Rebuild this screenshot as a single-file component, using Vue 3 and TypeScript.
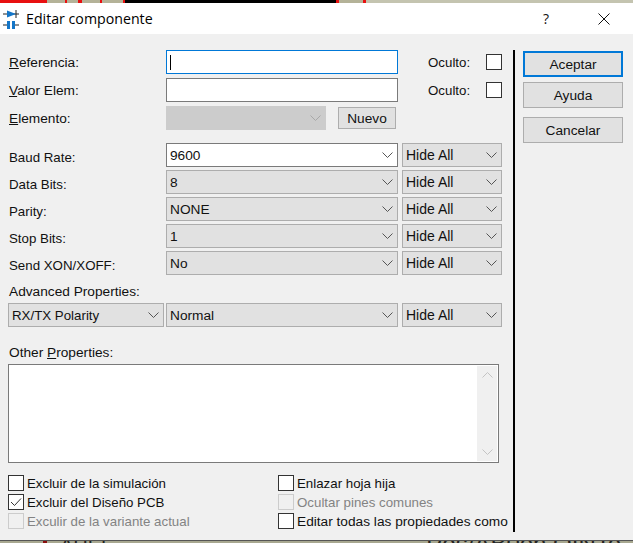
<script setup lang="ts">
interface Row { label: string; value: string; editable?: boolean }
const rows: Row[] = [
  { label: 'Baud Rate:', value: '9600', editable: true },
  { label: 'Data Bits:', value: '8' },
  { label: 'Parity:', value: 'NONE' },
  { label: 'Stop Bits:', value: '1' },
  { label: 'Send XON/XOFF:', value: 'No' }
]
</script>

<template>
  <div class="screen">
    <div class="strip-top">
      <span class="seg red w47"></span>
      <span class="seg tan w18"></span><span class="seg red w2"></span>
      <span class="seg tan w11"></span><span class="seg red w4"></span>
      <span class="seg tan w18"></span><span class="seg red w2"></span>
      <span class="seg tan w23"></span><span class="seg red w2"></span>
      <span class="seg black w211"></span>
      <span class="seg red w3"></span>
      <span class="seg tan w24"></span>
      <span class="seg red w3"></span>
      <span class="seg pale"></span>
    </div>
    <div class="titlebar">
      <svg class="app-icon" width="16" height="20" viewBox="0 0 16 20">
        <path d="M0 5h16M13 1v8" stroke="#222" stroke-width="1" fill="none" />
        <path d="M4 1.500l9 3.500-9 3.500z" fill="#1476c8" />
        <path d="M0 16h4M12 16h4" stroke="#222" stroke-width="1" fill="none" />
        <rect x="4" y="12" width="3" height="8" fill="#1476c8" />
        <rect x="9" y="12" width="3" height="8" fill="#1476c8" />
      </svg>
      <span class="title">Editar componente</span>
      <span class="help">?</span>
      <svg class="close" width="12" height="12" viewBox="0 0 12 12">
        <path d="M.5.5l11 11M11.500.5l-11 11" stroke="#111" stroke-width="1" fill="none" />
      </svg>
    </div>
    <div class="body">
      <div class="left">
        <div class="row first">
          <label class="lbl"><u>R</u>eferencia:</label>
          <div class="input focus"><i class="caret"></i></div>
          <span class="oc">Oculto:</span>
          <span class="check"></span>
        </div>
        <div class="row">
          <label class="lbl"><u>V</u>alor Elem:</label>
          <div class="input"></div>
          <span class="oc">Oculto:</span>
          <span class="check"></span>
        </div>
        <div class="row">
          <label class="lbl"><u>E</u>lemento:</label>
          <div class="combo disabled">
            <svg class="chev" width="11" height="6" viewBox="0 0 11 6"><path d="M.5.5l5 5 5-5" fill="none" stroke="#a8a8a8" /></svg>
          </div>
          <button class="nuevo">Nuevo</button>
        </div>
        <div class="props">
          <div v-for="r in rows" :key="r.label" class="prop">
            <span class="plbl">{{ r.label }}</span>
            <div class="combo wide" :class="{ edit: r.editable }">
              <span>{{ r.value }}</span>
              <svg class="chev" width="11" height="6" viewBox="0 0 11 6"><path d="M.5.5l5 5 5-5" fill="none" stroke="#555" /></svg>
            </div>
            <div class="combo hide">
              <span>Hide All</span>
              <svg class="chev" width="11" height="6" viewBox="0 0 11 6"><path d="M.5.5l5 5 5-5" fill="none" stroke="#555" /></svg>
            </div>
          </div>
        </div>
        <div class="adv-label">Advanced Properties:</div>
        <div class="adv">
          <div class="combo rx">
            <span>RX/TX Polarity</span>
            <svg class="chev" width="11" height="6" viewBox="0 0 11 6"><path d="M.5.5l5 5 5-5" fill="none" stroke="#555" /></svg>
          </div>
          <div class="combo wide">
            <span>Normal</span>
            <svg class="chev" width="11" height="6" viewBox="0 0 11 6"><path d="M.5.5l5 5 5-5" fill="none" stroke="#555" /></svg>
          </div>
          <div class="combo hide">
            <span>Hide All</span>
            <svg class="chev" width="11" height="6" viewBox="0 0 11 6"><path d="M.5.5l5 5 5-5" fill="none" stroke="#555" /></svg>
          </div>
        </div>
        <div class="other-label">Other <u>P</u>roperties:</div>
        <div class="textarea">
          <div class="scroll">
            <svg width="11" height="6" viewBox="0 0 11 6"><path d="M.5 5.500l5-5 5 5" fill="none" stroke="#c4c4c4" /></svg>
            <svg width="11" height="6" viewBox="0 0 11 6"><path d="M.5.5l5 5 5-5" fill="none" stroke="#c4c4c4" /></svg>
          </div>
        </div>
        <div class="checks">
          <div class="ck"><span class="check"></span>Excluir de la simulación</div>
          <div class="ck"><span class="check"></span>Enlazar hoja hija</div>
          <div class="ck">
            <span class="check">
              <svg width="14" height="14" viewBox="0 0 14 14"><path d="M2 7l3.500 3.500L12 3.500" fill="none" stroke="#333" /></svg>
            </span>Excluir del Diseño PCB
          </div>
          <div class="ck off"><span class="check"></span>Ocultar pines comunes</div>
          <div class="ck off"><span class="check"></span>Exculir de la variante actual</div>
          <div class="ck long"><span class="check"></span>Editar todas las propiedades como</div>
        </div>
      </div>
      <div class="divider"></div>
      <div class="buttons">
        <button class="btn default">Aceptar</button>
        <button class="btn">Ayuda</button>
        <button class="btn cancel">Cancelar</button>
      </div>
    </div>
    <div class="strip-bottom">
      <i class="mark"></i>
      <span class="sch a">AREF</span>
      <span class="sch b">Pos/AB0on OINTo</span>
    </div>
  </div>
</template>

<style scoped>
.screen {
  width: 633px;
  height: 543px;
  overflow: hidden;
  display: flex;
  flex-direction: column;
  font-family: "Liberation Sans", Arial, sans-serif;
  font-size: 13.7px;
  color: #111;
  background: #f0f0f0;
}
.strip-top { height: 3px; display: flex; flex: none; }
.seg { flex: none; }
.red { background: #e81010; }
.tan { background: #b4b298; }
.black { background: #000; }
.pale { flex: 1; background: #c4c4b0; }
.w2 { width: 2px; }
.w3 { width: 3px; }
.w4 { width: 4px; }
.w11 { width: 11px; }
.w18 { width: 18px; }
.w23 { width: 21px; }
.w24 { width: 24px; }
.w47 { width: 47px; }
.w211 { width: 211px; }
.titlebar {
  height: 31px;
  flex: none;
  background: #fff;
  display: flex;
  align-items: center;
  padding-left: 3px;
}
.app-icon { margin-right: 7px; }
.title { font-family: "Open Sans", sans-serif; font-size: 14.2px; color: #000; }
.help { margin-left: auto; font-family: "Open Sans", sans-serif; font-size: 14px; margin-right: 49px; }
.close { margin-right: 23px; }
.body { flex: 1; display: flex; min-height: 0; padding-top: 16px; }
.left { width: 513px; flex: none; padding-left: 8px; box-sizing: border-box; }
.row { display: flex; align-items: center; height: 24px; margin-bottom: 4px; }
.lbl { width: 158px; flex: none; padding-left: 1px; box-sizing: border-box; }
.input {
  width: 232px;
  height: 24px;
  box-sizing: border-box;
  background: #fff;
  border: 1px solid #7a7a7a;
  flex: none;
  display: flex;
  align-items: center;
  padding-left: 3px;
}
.input.focus { border-color: #0078d7; }
.caret { width: 1px; height: 15px; background: #000; }
.oc { margin-left: 30px; width: 58px; flex: none; font-size: 13.3px; }
.check {
  width: 16px;
  height: 16px;
  box-sizing: border-box;
  border: 1px solid #333;
  background: #fff;
  flex: none;
  display: inline-flex;
  align-items: center;
  justify-content: center;
}
.combo {
  height: 24px;
  box-sizing: border-box;
  border: 1px solid #adadad;
  background: #e1e1e1;
  display: flex;
  align-items: center;
  justify-content: space-between;
  padding: 0 4px 0 3px;
  flex: none;
}
.chev { flex: none; margin-left: auto; }
.combo.disabled { width: 160px; background: #ccc; border-color: #ccc; }
.combo.wide { width: 232px; }
.combo.edit { background: #fff; border-color: #7a7a7a; }
.combo.hide { width: 100px; margin-left: 4px; font-size: 14px; }
.combo.rx { width: 156px; margin-right: 2px; font-size: 13.3px; }
.nuevo {
  width: 58px;
  height: 22px;
  margin-left: 12px;
  font: inherit;
  color: inherit;
  background: #e1e1e1;
  border: 1px solid #adadad;
  padding: 0;
}
.props { margin-top: 13px; display: flex; flex-direction: column; gap: 3px; }
.prop { display: flex; align-items: center; }
.plbl { width: 158px; flex: none; padding: 5px 0 0 1px; box-sizing: border-box; font-size: 13.3px; }
.adv-label { margin-top: 9px; padding-left: 1px; height: 19px; line-height: 15px; }
.adv { display: flex; }
.other-label { margin-top: 18px; padding-left: 1px; height: 19px; line-height: 15px; }
.textarea {
  width: 491px;
  height: 99px;
  box-sizing: border-box;
  background: #fff;
  border: 1px solid #7a7a7a;
  display: flex;
  justify-content: flex-end;
  padding: 1px;
}
.scroll {
  width: 20px;
  background: #f0f0f0;
  display: flex;
  flex-direction: column;
  justify-content: space-between;
  align-items: center;
  padding: 6px 0;
  box-sizing: border-box;
}
.checks {
  margin-top: 12px;
  display: grid;
  grid-template-columns: 270px 1fr;
  grid-auto-rows: 19px;
  font-size: 13.3px;
}
.ck { display: flex; align-items: center; gap: 3px; white-space: nowrap; height: 16px; }
.ck.long { font-size: 13.7px; }
.ck.off { color: #838383; }
.ck.off .check { border-color: #ccc; background: #f0f0f0; }
.divider { width: 2px; flex: none; height: 482px; background: #000; }
.buttons { display: flex; flex-direction: column; gap: 5px; padding: 1px 0 0 8px; }
.btn {
  width: 100px;
  height: 26px;
  font: inherit;
  color: inherit;
  background: #e1e1e1;
  border: 1px solid #adadad;
  padding: 0;
}
.btn.default { border: 2px solid #0078d7; }
.btn.cancel { margin-top: 4px; }
.strip-bottom {
  height: 3px;
  flex: none;
  box-sizing: border-box;
  border-top: 1px solid #555;
  background: #a8a890;
  display: flex;
  overflow: hidden;
  font-size: 20px;
  line-height: 20px;
  color: #222;
}
.mark { width: 4px; height: 3px; margin-left: 43px; background: #8a0d0d; flex: none; }
.sch { flex: none; white-space: nowrap; margin-top: -6px; }
.a { margin-left: 13px; }
.b { margin-left: 313px; font-size: 24px; margin-top: -7px; }
</style>
